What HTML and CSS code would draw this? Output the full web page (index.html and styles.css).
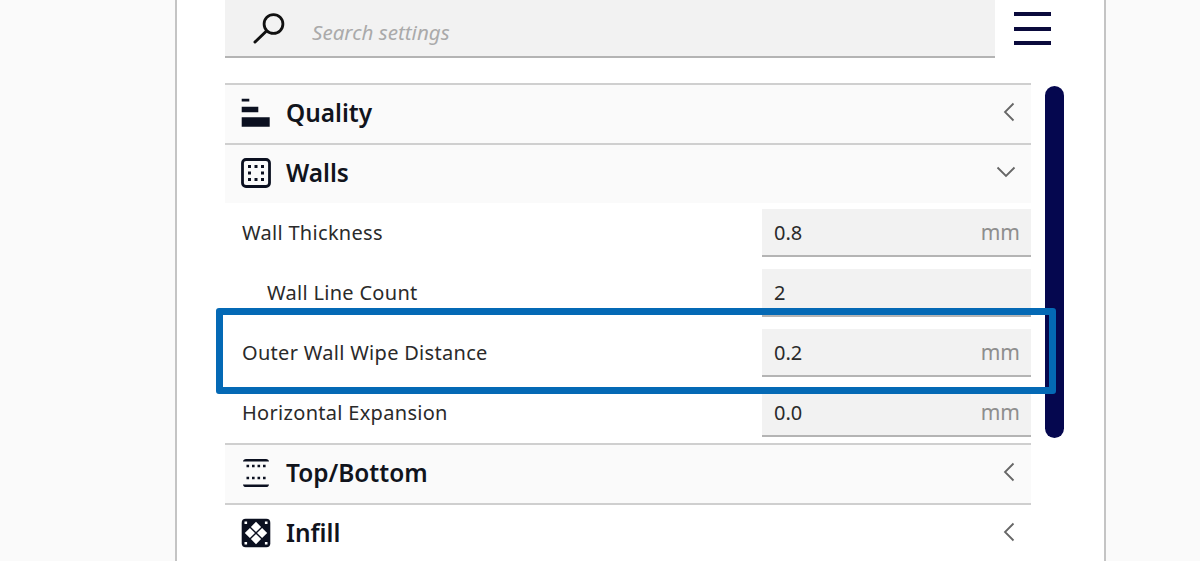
FILE: index.html
```html
<!DOCTYPE html>
<html lang="en">
<head>
<meta charset="utf-8">
<title>Search settings</title>
<link rel="stylesheet" href="styles.css">
</head>
<body>
<div class="page">
  <main class="panel">
    <div class="topbar">
      <div class="search">
        <svg class="search-icon" width="34" height="32" viewBox="0 0 34 32"><circle cx="22.500" cy="12" r="9.400" fill="none" stroke="#111" stroke-width="2.800"/><path d="M15.500 19 4 30" stroke="#111" stroke-width="3" stroke-linecap="round"/></svg>
        <span class="search-text">Search settings</span>
      </div>
      <button class="menu" aria-label="Menu"><span></span><span></span><span></span></button>
    </div>
    <div class="content">
      <div class="list">
        <section class="cat">
          <svg class="cat-icon" width="30" height="30" viewBox="0 0 30 30"><path d="M.7.7h7.600v2.900H.7zM.7 8.700h16.600v5.600H.7zM.7 19.300h28v9.400H.7z" fill="#0b1020"/></svg>
          <h2>Quality</h2>
          <svg class="chev" width="14" height="20" viewBox="0 0 14 20"><path d="M11.500 1.500 3 10l8.500 8.500" fill="none" stroke="#666" stroke-width="1.800"/></svg>
        </section>
        <section class="cat">
          <svg class="cat-icon" width="30" height="30" viewBox="0 0 30 30"><rect x="1.500" y="1.500" width="27" height="27" rx="3.500" fill="none" stroke="#0b1020" stroke-width="2.800"/><path d="M7 7h3v3H7zM13.500 7h3v3h-3zM20 7h3v3h-3zM7 13.500h3v3H7zM20 13.500h3v3h-3zM7 20h3v3H7zM13.500 20h3v3h-3zM20 20h3v3h-3z" fill="#0b1020"/></svg>
          <h2>Walls</h2>
          <svg class="chev" width="20" height="14" viewBox="0 0 20 14"><path d="M1.500 2.500 10 11l8.500-8.500" fill="none" stroke="#666" stroke-width="1.800"/></svg>
        </section>
        <div class="setting">
          <label>Wall Thickness</label>
          <div class="field"><span>0.8</span><span class="unit">mm</span></div>
        </div>
        <div class="setting sub">
          <label>Wall Line Count</label>
          <div class="field"><span>2</span></div>
        </div>
        <div class="setting">
          <label>Outer Wall Wipe Distance</label>
          <div class="field"><span>0.2</span><span class="unit">mm</span></div>
        </div>
        <div class="setting">
          <label>Horizontal Expansion</label>
          <div class="field"><span>0.0</span><span class="unit">mm</span></div>
        </div>
        <section class="cat">
          <svg class="cat-icon" width="30" height="30" viewBox="0 0 30 30"><path d="M2 3.600C2 2 3.500 1 5 1h20c1.500 0 3 1 3 2.600H2zM2 26.400C2 28 3.500 29 5 29h20c1.500 0 3-1 3-2.600H2z" fill="#0b1020"/><path d="M5.500 6.700h2.600v2.600H5.500zM11 6.700h2.600v2.600H11zM16.500 6.700h2.600v2.600h-2.600zM22 6.700h2.600v2.600H22zM5.500 18.700h2.600v2.600H5.500zM11 18.700h2.600v2.600H11zM16.500 18.700h2.600v2.600h-2.600zM22 18.700h2.600v2.600H22z" fill="#0b1020"/></svg>
          <h2>Top/Bottom</h2>
          <svg class="chev" width="14" height="20" viewBox="0 0 14 20"><path d="M11.500 1.500 3 10l8.500 8.500" fill="none" stroke="#666" stroke-width="1.800"/></svg>
        </section>
        <section class="cat plain">
          <svg class="cat-icon" width="30" height="30" viewBox="0 0 30 30"><rect x=".7" y=".7" width="28.600" height="28.600" rx="4" fill="#0b1020"/><path d="M15 3.800l5.100 5.100-5.100 5.100-5.100-5.100zM3.800 15l5.100-5.100 5.100 5.100-5.100 5.100zM21.100 9.900l5.100 5.100-5.100 5.100-5.100-5.100zM15 16l5.100 5.100-5.100 5.100-5.100-5.100z" fill="#fff"/><path d="M3.500 3.500h2.600v2.600H3.500zM23.900 3.500h2.600v2.600h-2.600zM3.500 23.900h2.600v2.600H3.500zM23.900 23.900h2.600v2.600h-2.600z" fill="#fff"/></svg>
          <h2>Infill</h2>
          <svg class="chev" width="14" height="20" viewBox="0 0 14 20"><path d="M11.500 1.500 3 10l8.500 8.500" fill="none" stroke="#666" stroke-width="1.800"/></svg>
        </section>
      </div>
      <div class="scrollbar"></div>
    </div>
    <div class="highlight"></div>
  </main>
</div>
</body>
</html>
```

FILE: styles.css
```css
* { box-sizing: border-box; }
html, body { margin: 0; padding: 0; }
body { font-family: "Noto Sans", "Open Sans", sans-serif; background: #fafafa; }
.page { width: 1200px; height: 561px; overflow: hidden; background: #fafafa; padding-left: 175px; }
.panel { position: relative; width: 931px; height: 561px; background: #fff; border-left: 2px solid #c4c4c4; border-right: 2px solid #c4c4c4; padding-left: 48px; }
.topbar { display: flex; height: 83px; align-items: flex-start; }
.search { width: 770px; height: 58px; background: #f2f2f2; border-bottom: 2px solid #b4b4b4; display: flex; align-items: center; padding-left: 26px; }
.search-icon { flex: none; }
.search-text { margin: 8px 0 0 27px; font-size: 20.600px; font-style: italic; color: #aaa; }
.menu { border: 0; background: none; padding: 0; margin: 12px 0 0 19px; width: 37px; display: flex; flex-direction: column; gap: 10.500px; }
.menu span { display: block; height: 4px; background: #0a0a3c; }
.content { display: flex; align-items: flex-start; }
.list { width: 806px; flex: none; }
.cat { height: 60px; background: #fafafa; border-top: 2px solid #cfcfcf; display: flex; align-items: center; padding: 0 15px 2px 16px; }
.cat.plain { background: #fff; }
.cat-icon { flex: none; }
.cat h2 { margin: 0 0 0 15px; flex: 1; font-size: 24.400px; font-weight: 600; color: #11141c; line-height: 32px; }
.chev { flex: none; margin-bottom: 2px; }
.setting { height: 60px; display: flex; align-items: center; justify-content: space-between; padding-left: 17px; font-size: 20px; color: #2a2a2a; }
.setting label { letter-spacing: .3px; margin-bottom: 2px; }
.setting.sub { padding-left: 42px; }
.field { width: 269px; height: 48px; background: #f2f2f2; border-bottom: 2px solid #b4b4b4; display: flex; align-items: center; justify-content: space-between; padding: 0 11px 0 12px; }
.unit { color: #8e8e8e; font-size: 21px; }
.scrollbar { width: 19px; height: 352px; margin: 3px 0 0 14px; border-radius: 10px; background: #05074f; }
.highlight { position: absolute; left: 39px; top: 308px; width: 840px; height: 86px; border: 7px solid #0469b5; border-radius: 3px; }
```
